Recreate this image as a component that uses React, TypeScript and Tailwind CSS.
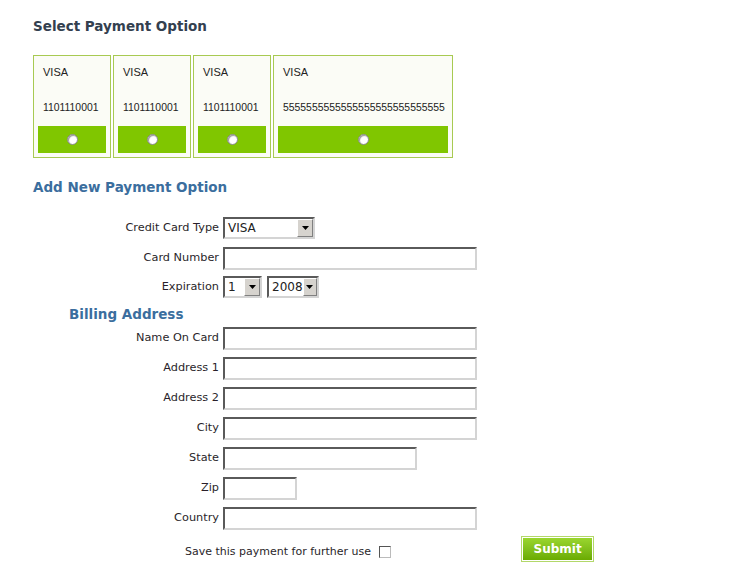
import React from "react";

const cards = [
  { type: "VISA", num: "1101110001", w: "w-[78px]" },
  { type: "VISA", num: "1101110001", w: "w-[78px]" },
  { type: "VISA", num: "1101110001", w: "w-[78px]" },
  { type: "VISA", num: "5555555555555555555555555555", w: "w-[180px]" },
];

const inset =
  "border-2 border-t-[#5a5a5a] border-l-[#5a5a5a] border-b-[#d4d4d4] border-r-[#d4d4d4] bg-white";

const Arrow = () => (
  <div className="w-[16px] h-[18px] bg-[#d6d3ce] border border-t-white border-l-white border-b-[#808080] border-r-[#808080] flex items-center justify-center">
    <svg width="7" height="4" viewBox="0 0 7 4">
      <path d="M0 0h7L3.5 4z" fill="#000" />
    </svg>
  </div>
);

const FakeSelect = ({ value, w }: { value: string; w: string }) => (
  <div className={`${inset} ${w} h-[22px] flex items-center justify-between pl-[3px]`}>
    <span className="text-[12px] text-[#222]">{value}</span>
    <Arrow />
  </div>
);

const Row = ({ label, children, mt }: { label: string; children: React.ReactNode; mt: string }) => (
  <div className={`flex items-center ${mt}`}>
    <div className="w-[190px] pr-[4px] text-right text-[11.3px] text-[#2a1f2a]">{label}</div>
    {children}
  </div>
);

const Input = ({ w }: { w: string }) => <div className={`${inset} ${w} h-[23px]`} />;

export default function App() {
  return (
    <div className="min-h-screen bg-white pl-[33px] pt-[16px] font-['DejaVu_Sans',sans-serif]">
      <h2 className="h-[20px] leading-[20px] text-[13.5px] font-bold text-[#33404f]">Select Payment Option</h2>

      <div className="mt-[19px] flex gap-[2px]">
        {cards.map((c, i) => (
          <div
            key={i}
            className={`${c.w} shrink-0 overflow-hidden h-[103px] border border-[#a8ca52] bg-[#fbfcf6] p-[4px] flex flex-col font-['Liberation_Sans',sans-serif] text-[10.4px] text-[#222]`}
          >
            <div className="h-[66px] pl-[5px] pt-[5px] leading-[14px] whitespace-nowrap">
              <div className="text-[11px]">{c.type}</div>
              <div className="mt-[22px]">{c.num}</div>
            </div>
            <div className="flex-1 bg-[#80c600] flex items-center justify-center">
              <div className="w-[11px] h-[11px] rounded-full bg-white border border-[#8a8a8a] shadow-[inset_1px_1px_1px_#999]" />
            </div>
          </div>
        ))}
      </div>

      <h2 className="mt-[19px] h-[20px] leading-[20px] text-[13.5px] font-bold text-[#3b6e9e]">Add New Payment Option</h2>

      <Row label="Credit Card Type" mt="mt-[20px]">
        <FakeSelect value="VISA" w="w-[92px]" />
      </Row>
      <Row label="Card Number" mt="mt-[8px]">
        <Input w="w-[254px]" />
      </Row>
      <Row label="Expiration" mt="mt-[6px]">
        <FakeSelect value="1" w="w-[39px]" />
        <div className="ml-[5px]">
          <FakeSelect value="2008" w="w-[52px]" />
        </div>
      </Row>

      <h3 className="ml-[36px] mt-[6px] h-[20px] leading-[20px] text-[13.5px] font-bold text-[#3b6e9e]">Billing Address</h3>

      <Row label="Name On Card" mt="mt-[3px]">
        <Input w="w-[254px]" />
      </Row>
      <Row label="Address 1" mt="mt-[7px]">
        <Input w="w-[254px]" />
      </Row>
      <Row label="Address 2" mt="mt-[7px]">
        <Input w="w-[254px]" />
      </Row>
      <Row label="City" mt="mt-[7px]">
        <Input w="w-[254px]" />
      </Row>
      <Row label="State" mt="mt-[7px]">
        <Input w="w-[194px]" />
      </Row>
      <Row label="Zip" mt="mt-[7px]">
        <Input w="w-[74px]" />
      </Row>
      <Row label="Country" mt="mt-[7px]">
        <Input w="w-[254px]" />
      </Row>

      <div className="mt-[6px] flex items-start pl-[152px]">
        <span className="mt-[9px] leading-[14px] text-[11px] text-[#2a1f2a]">Save this payment for further use</span>
        <div className="ml-[8px] mt-[10px] w-[12px] h-[12px] border border-t-[#555] border-l-[#555] border-b-[#bbb] border-r-[#bbb] bg-white" />
        <button className="ml-[130px] w-[73px] h-[26px] border border-[#b3d86a] p-[1px] bg-white">
          <div className="w-full h-full bg-gradient-to-b from-[#9ad62e] to-[#6aab00] text-white font-bold text-[12px] flex items-center justify-center">
            Submit
          </div>
        </button>
      </div>
    </div>
  );
}
